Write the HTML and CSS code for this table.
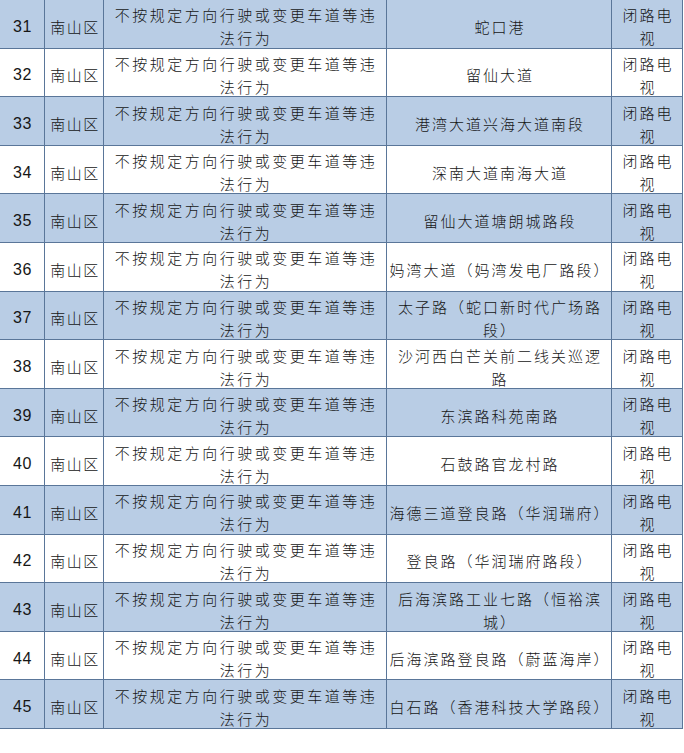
FILE: index.html
```html
<!DOCTYPE html>
<html lang="zh-CN">
<head>
<meta charset="utf-8">
<title>表格</title>
<link rel="stylesheet" href="styles.css">
</head>
<body>
<div class="grid">
  <div class="c num b">31</div><div class="c dist b">南山区</div><div class="c act b">不按规定方向行驶或变更车道等违<br>法行为</div><div class="c loc b">蛇口港</div><div class="c way b">闭路电<br>视</div>
  <div class="c num">32</div><div class="c dist">南山区</div><div class="c act">不按规定方向行驶或变更车道等违<br>法行为</div><div class="c loc">留仙大道</div><div class="c way">闭路电<br>视</div>
  <div class="c num b">33</div><div class="c dist b">南山区</div><div class="c act b">不按规定方向行驶或变更车道等违<br>法行为</div><div class="c loc b">港湾大道兴海大道南段</div><div class="c way b">闭路电<br>视</div>
  <div class="c num">34</div><div class="c dist">南山区</div><div class="c act">不按规定方向行驶或变更车道等违<br>法行为</div><div class="c loc">深南大道南海大道</div><div class="c way">闭路电<br>视</div>
  <div class="c num b">35</div><div class="c dist b">南山区</div><div class="c act b">不按规定方向行驶或变更车道等违<br>法行为</div><div class="c loc b">留仙大道塘朗城路段</div><div class="c way b">闭路电<br>视</div>
  <div class="c num">36</div><div class="c dist">南山区</div><div class="c act">不按规定方向行驶或变更车道等违<br>法行为</div><div class="c loc">妈湾大道（妈湾发电厂路段）</div><div class="c way">闭路电<br>视</div>
  <div class="c num b">37</div><div class="c dist b">南山区</div><div class="c act b">不按规定方向行驶或变更车道等违<br>法行为</div><div class="c loc b">太子路（蛇口新时代广场路<br>段）</div><div class="c way b">闭路电<br>视</div>
  <div class="c num">38</div><div class="c dist">南山区</div><div class="c act">不按规定方向行驶或变更车道等违<br>法行为</div><div class="c loc">沙河西白芒关前二线关巡逻<br>路</div><div class="c way">闭路电<br>视</div>
  <div class="c num b">39</div><div class="c dist b">南山区</div><div class="c act b">不按规定方向行驶或变更车道等违<br>法行为</div><div class="c loc b">东滨路科苑南路</div><div class="c way b">闭路电<br>视</div>
  <div class="c num">40</div><div class="c dist">南山区</div><div class="c act">不按规定方向行驶或变更车道等违<br>法行为</div><div class="c loc">石鼓路官龙村路</div><div class="c way">闭路电<br>视</div>
  <div class="c num b">41</div><div class="c dist b">南山区</div><div class="c act b">不按规定方向行驶或变更车道等违<br>法行为</div><div class="c loc b">海德三道登良路（华润瑞府）</div><div class="c way b">闭路电<br>视</div>
  <div class="c num">42</div><div class="c dist">南山区</div><div class="c act">不按规定方向行驶或变更车道等违<br>法行为</div><div class="c loc">登良路（华润瑞府路段）</div><div class="c way">闭路电<br>视</div>
  <div class="c num b">43</div><div class="c dist b">南山区</div><div class="c act b">不按规定方向行驶或变更车道等违<br>法行为</div><div class="c loc b">后海滨路工业七路（恒裕滨<br>城）</div><div class="c way b">闭路电<br>视</div>
  <div class="c num">44</div><div class="c dist">南山区</div><div class="c act">不按规定方向行驶或变更车道等违<br>法行为</div><div class="c loc">后海滨路登良路（蔚蓝海岸）</div><div class="c way">闭路电<br>视</div>
  <div class="c num b">45</div><div class="c dist b">南山区</div><div class="c act b">不按规定方向行驶或变更车道等违<br>法行为</div><div class="c loc b">白石路（香港科技大学路段）</div><div class="c way b">闭路电<br>视</div>
</div>
</body>
</html>
```

FILE: styles.css
```css
html, body {
  margin: 0;
  padding: 0;
  background: #ffffff;
}

.grid {
  display: grid;
  grid-template-columns: 44px 58px 282px 224px 70px;
  grid-template-rows: repeat(15, minmax(0, 1fr));
  gap: 1px;
  padding: 0 1px 1px 0;
  width: 683px;
  height: 729px;
  box-sizing: border-box;
  background: #5a7699;
}

.c {
  display: flex;
  align-items: center;
  justify-content: center;
  text-align: center;
  background: #ffffff;
  color: #161616;
  font-family: "Noto Sans CJK SC", "Noto Sans", sans-serif;
  font-weight: 300;
  font-size: 15px;
  line-height: 23px;
  letter-spacing: 2px;
  padding-top: 5px;
  padding-left: 2px;
  box-sizing: border-box;
  white-space: nowrap;
  overflow: visible;
  min-height: 0;
}

.c.b {
  background: #b9cde5;
}

.num {
  font-family: "Liberation Sans", "Noto Sans", sans-serif;
  font-size: 16px;
  letter-spacing: 0.5px;
  padding-left: 1px;
}

.dist {
  letter-spacing: 1.5px;
}

.act {
  letter-spacing: 2.5px;
}

.loc {
  letter-spacing: 2px;
}
```
